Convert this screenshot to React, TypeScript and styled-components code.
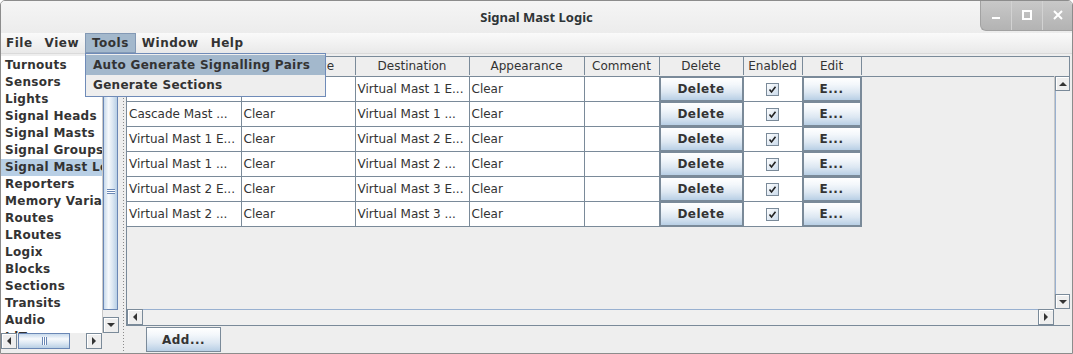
import React from "react";
import styled, {createGlobalStyle, css} from "styled-components";

const GlobalStyle = createGlobalStyle`
    html, body {
        margin: 0;
        padding: 0;
        background: #ffffff;
    }
    body {
        font-family: "DejaVu Sans", sans-serif;
        font-size: 12px;
        color: #333333;
    }
`;

const GRID = "#7a8a99";
const SELECT = "#b8cfe5";
const MENU_SELECT = "#a3b8cc";

const Frame = styled.div`
    position: relative;
    width: 1073px;
    height: 354px;
    box-sizing: border-box;
    display: flex;
    flex-direction: column;
    background: #eeeeee;
    border: 1px solid #8c8c8c;
    border-radius: 5px 5px 0 0;
    overflow: hidden;
`;

const TitleBar = styled.div`
    height: 32px;
    flex: none;
    display: grid;
    grid-template-columns: 1fr auto 1fr;
    align-items: start;
    background: linear-gradient(#f5f5f5, #ececec);
`;

const Title = styled.div`
    align-self: center;
    font-family: "Noto Sans", "DejaVu Sans", sans-serif;
    font-weight: 700;
    font-size: 13px;
    color: #2e3436;
`;

const Controls = styled.div`
    justify-self: end;
    display: flex;
    height: 30px;
    margin-top: -1px;
    margin-right: -1px;
    border: 1px solid #a2a2a2;
    border-top: none;
    border-right: none;
    border-bottom-left-radius: 6px;
    overflow: hidden;
    background: linear-gradient(#c9c9c9, #b3b3b3);
`;

const ControlButton = styled.div<{ $first?: boolean }>`
    width: 30px;
    display: flex;
    align-items: center;
    justify-content: center;
    ${(p) =>
        !p.$first &&
        css`
            border-left: 1px solid #d2d2d2;
        `}
`;

const MenuBar = styled.div`
    height: 20px;
    flex: none;
    display: flex;
    align-items: stretch;
    margin-left: -1px;
    background: linear-gradient(#fafafa, #e9e9e9);
    border-bottom: 1px solid #dadada;
`;

const MenuItem = styled.div<{ $active?: boolean }>`
    display: flex;
    align-items: center;
    padding: 0 5px;
    font-weight: 700;
    font-size: 12px;
    letter-spacing: 0.5px;
    color: #333333;
    box-sizing: border-box;
    border: 1px solid transparent;
    ${(p) =>
        p.$active &&
        css`
            padding: 0 6px;
            background: ${MENU_SELECT};
            border-color: #8399b5;
        `}
`;

const Popup = styled.div`
    position: absolute;
    left: 84px;
    top: 52px;
    width: 241px;
    box-sizing: border-box;
    border: 1px solid #6f8bb8;
    background: #eeeeee;
    padding: 1px 0;
    z-index: 5;
`;

const PopupItem = styled.div<{ $active?: boolean }>`
    height: 20px;
    display: flex;
    align-items: center;
    padding-left: 7px;
    font-weight: 700;
    letter-spacing: 0.3px;
    white-space: nowrap;
    background: ${(p) => (p.$active ? MENU_SELECT : "transparent")};
`;

const Body = styled.div`
    flex: 1;
    display: flex;
    min-height: 0;
    padding-top: 2px;
`;

const LeftPane = styled.div`
    width: 117px;
    flex: none;
    display: flex;
    flex-direction: column;
    padding-bottom: 4px;
`;

const ListRow = styled.div`
    flex: 1;
    display: flex;
    min-height: 0;
`;

const ListView = styled.div`
    flex: 1;
    background: #ffffff;
    overflow: hidden;
    padding-top: 1px;
`;

const ListEntry = styled.div<{ $selected?: boolean }>`
    height: 17px;
    line-height: 17px;
    padding-left: 4px;
    font-weight: 700;
    letter-spacing: 0.3px;
    white-space: nowrap;
    color: #333333;
    background: ${(p) => (p.$selected ? SELECT : "transparent")};
`;

const VBar = styled.div`
    width: 16px;
    flex: none;
    display: flex;
    flex-direction: column;
    background: #eeeeee;
    box-sizing: border-box;
    border-left: 1px solid #c8c8c8;
`;

const HBar = styled.div`
    height: 16px;
    flex: none;
    display: flex;
    background: #eeeeee;
`;

const ArrowButton = styled.div<{ $size?: number }>`
    flex: none;
    width: ${(p) => p.$size ?? 16}px;
    height: ${(p) => p.$size ?? 16}px;
    box-sizing: border-box;
    display: flex;
    align-items: center;
    justify-content: center;
    background: #eeeeee;
    border: 1px solid ${GRID};
    box-shadow: inset 1px 1px 0 #ffffff;
`;

const Triangle = styled.div<{ $dir: "up" | "down" | "left" | "right" }>`
    width: 0;
    height: 0;
    ${(p) =>
        p.$dir === "up"
            ? css`
                  border-left: 4px solid transparent;
                  border-right: 4px solid transparent;
                  border-bottom: 4px solid #333;
              `
            : p.$dir === "down"
            ? css`
                  border-left: 4px solid transparent;
                  border-right: 4px solid transparent;
                  border-top: 4px solid #333;
              `
            : p.$dir === "left"
            ? css`
                  border-top: 4px solid transparent;
                  border-bottom: 4px solid transparent;
                  border-right: 4px solid #333;
              `
            : css`
                  border-top: 4px solid transparent;
                  border-bottom: 4px solid transparent;
                  border-left: 4px solid #333;
              `}
`;

const Track = styled.div`
    flex: 1;
    display: flex;
    min-width: 0;
    min-height: 0;
`;

const VThumb = styled.div<{ $start: number; $end: number }>`
    margin-top: ${(p) => p.$start}px;
    margin-bottom: ${(p) => p.$end}px;
    flex: 1;
    box-sizing: border-box;
    border: 1px solid #6a87b5;
    background: linear-gradient(to right, #c8daec 0%, #f6f9fc 35%, #dde8f3 65%, #b8cfe5 100%);
    display: flex;
    align-items: center;
    justify-content: center;
`;

const HThumb = styled.div<{ $start: number; $end: number }>`
    margin-left: ${(p) => p.$start}px;
    margin-right: ${(p) => p.$end}px;
    flex: 1;
    box-sizing: border-box;
    border: 1px solid #6a87b5;
    background: linear-gradient(#c8daec 0%, #f6f9fc 35%, #dde8f3 65%, #b8cfe5 100%);
    display: flex;
    align-items: center;
    justify-content: center;
`;

const Grip = styled.div<{ $vertical?: boolean }>`
    ${(p) =>
        p.$vertical
            ? css`
                  width: 8px;
                  height: 5px;
                  background: repeating-linear-gradient(#6a87b5 0 1px, #ffffff 1px 2px);
              `
            : css`
                  width: 5px;
                  height: 8px;
                  background: repeating-linear-gradient(to right, #6a87b5 0 1px, #ffffff 1px 2px);
              `}
`;

const FullVThumb = styled.div`
    flex: 1;
    border-left: 1px solid #98b0d0;
    background: #f0f0f0;
`;

const FullHThumb = styled.div`
    flex: 1;
    border-top: 1px solid #98b0d0;
    background: #f0f0f0;
`;

const Corner = styled.div`
    width: 16px;
    flex: none;
    background: #eeeeee;
`;

const Divider = styled.div`
    width: 8px;
    flex: none;
    display: flex;
    &::after {
        content: "";
        width: 1px;
        margin-left: 5px;
        background: repeating-linear-gradient(#8a8a8a 0 1px, transparent 1px 3px);
    }
`;

const RightPane = styled.div`
    flex: 1;
    display: flex;
    flex-direction: column;
    margin-right: 2px;
    min-width: 0;
`;

const TableScroll = styled.div`
    height: 270px;
    flex: none;
    box-sizing: border-box;
    border: 1px solid ${GRID};
    display: grid;
    grid-template-columns: 1fr 15px;
    grid-template-rows: 19px 1fr 16px;
`;

const HeaderArea = styled.div`
    grid-column: 1 / 3;
    overflow: hidden;
`;

const Viewport = styled.div`
    overflow: hidden;
    border-top: 1px solid ${GRID};
`;

const Table = styled.table`
    border-collapse: collapse;
    table-layout: fixed;
    width: 734px;
`;

const HeadCell = styled.th`
    height: 18px;
    padding: 0;
    font-weight: 400;
    font-size: 12px;
    color: #333333;
    text-align: center;
    background: #eeeeee;
    border-right: 1px solid ${GRID};
    white-space: nowrap;
    overflow: hidden;
`;

const Cell = styled.td<{ $center?: boolean }>`
    height: 24px;
    padding: 0 0 0 ${(p) => (p.$center ? 0 : 2)}px;
    border: 1px solid ${GRID};
    border-top: none;
    background: #ffffff;
    white-space: nowrap;
    overflow: hidden;
    text-align: ${(p) => (p.$center ? "center" : "left")};
    vertical-align: middle;
    &:first-child {
        border-left: none;
    }
`;

const ButtonCell = styled.td`
    height: 24px;
    padding: 0;
    border: 1px solid ${GRID};
    border-top: none;
`;

const oceanGradient = css`
    background: linear-gradient(#ffffff 0%, #f3f7fb 30%, #dce7f2 65%, #b8cfe5 100%);
`;

const CellButton = styled.div`
    height: 24px;
    box-sizing: border-box;
    border: 1px solid ${GRID};
    ${oceanGradient};
    display: flex;
    align-items: center;
    justify-content: center;
    font-weight: 700;
    letter-spacing: 0.5px;
    color: #333333;
`;

const ButtonRow = styled.div`
    flex: 1;
    display: flex;
    align-items: flex-start;
    padding: 1px 0 0 20px;
`;

const PushButton = styled.div`
    width: 75px;
    height: 25px;
    box-sizing: border-box;
    border: 1px solid ${GRID};
    ${oceanGradient};
    display: flex;
    align-items: center;
    justify-content: center;
    font-weight: 700;
    letter-spacing: 0.5px;
    color: #333333;
`;

const columns = [
    {title: "Source", width: 114},
    {title: "Appearance", width: 114},
    {title: "Destination", width: 114},
    {title: "Appearance", width: 115},
    {title: "Comment", width: 75},
    {title: "Delete", width: 84},
    {title: "Enabled", width: 59},
    {title: "Edit", width: 59},
];

const rows = [
    ["Cascade Mast ...", "Clear", "Virtual Mast 1 E...", "Clear"],
    ["Cascade Mast ...", "Clear", "Virtual Mast 1 ...", "Clear"],
    ["Virtual Mast 1 E...", "Clear", "Virtual Mast 2 E...", "Clear"],
    ["Virtual Mast 1 ...", "Clear", "Virtual Mast 2 ...", "Clear"],
    ["Virtual Mast 2 E...", "Clear", "Virtual Mast 3 E...", "Clear"],
    ["Virtual Mast 2 ...", "Clear", "Virtual Mast 3 ...", "Clear"],
];

const tables = [
    "Turnouts",
    "Sensors",
    "Lights",
    "Signal Heads",
    "Signal Masts",
    "Signal Groups",
    "Signal Mast Logic",
    "Reporters",
    "Memory Variables",
    "Routes",
    "LRoutes",
    "Logix",
    "Blocks",
    "Sections",
    "Transits",
    "Audio",
    "IdTags",
];

const Cols = () => (
    <colgroup>
        {columns.map((c, i) => (
            <col key={i} style={{width: c.width}} />
        ))}
    </colgroup>
);

const CheckBox = () => (
    <svg width="13" height="13" viewBox="0 0 13 13" style={{display: "block", margin: "0 auto"}}>
        <defs>
            <linearGradient id="cbg" x1="0" y1="0" x2="1" y2="1">
                <stop offset="0" stopColor="#ffffff" />
                <stop offset="1" stopColor="#c9d9ea" />
            </linearGradient>
        </defs>
        <rect x="0.5" y="0.5" width="12" height="12" fill="url(#cbg)" stroke={GRID} />
        <path d="M3.5 6.5 L5.5 9 L9.5 3.8" fill="none" stroke="#222" strokeWidth="1.6" />
    </svg>
);

function App() {
    return (
        <>
            <GlobalStyle />
            <Frame>
                <TitleBar>
                    <div />
                    <Title>Signal Mast Logic</Title>
                    <Controls>
                        <ControlButton $first>
                            <svg width="10" height="10" viewBox="0 0 10 10">
                                <rect x="1" y="7" width="8" height="2" fill="#ffffff" />
                            </svg>
                        </ControlButton>
                        <ControlButton>
                            <svg width="10" height="10" viewBox="0 0 10 10">
                                <rect x="1" y="1" width="8" height="8" fill="none" stroke="#ffffff" strokeWidth="2" />
                            </svg>
                        </ControlButton>
                        <ControlButton>
                            <svg width="10" height="10" viewBox="0 0 10 10">
                                <path d="M1 1 L9 9 M9 1 L1 9" stroke="#ffffff" strokeWidth="2" />
                            </svg>
                        </ControlButton>
                    </Controls>
                </TitleBar>
                <MenuBar>
                    <MenuItem>File</MenuItem>
                    <MenuItem>View</MenuItem>
                    <MenuItem $active>Tools</MenuItem>
                    <MenuItem>Window</MenuItem>
                    <MenuItem>Help</MenuItem>
                </MenuBar>
                <Body>
                    <LeftPane>
                        <ListRow>
                            <ListView>
                                {tables.map((t) => (
                                    <ListEntry key={t} $selected={t === "Signal Mast Logic"}>
                                        {t}
                                    </ListEntry>
                                ))}
                            </ListView>
                            <VBar>
                                <ArrowButton>
                                    <Triangle $dir="up" />
                                </ArrowButton>
                                <Track>
                                    <VThumb $start={1} $end={7}>
                                        <Grip $vertical />
                                    </VThumb>
                                </Track>
                                <ArrowButton>
                                    <Triangle $dir="down" />
                                </ArrowButton>
                            </VBar>
                        </ListRow>
                        <HBar>
                            <ArrowButton>
                                <Triangle $dir="left" />
                            </ArrowButton>
                            <Track>
                                <HThumb $start={1} $end={16}>
                                    <Grip />
                                </HThumb>
                            </Track>
                            <ArrowButton>
                                <Triangle $dir="right" />
                            </ArrowButton>
                            <Corner />
                        </HBar>
                    </LeftPane>
                    <Divider />
                    <RightPane>
                        <TableScroll>
                            <HeaderArea>
                                <Table>
                                    <Cols />
                                    <thead>
                                        <tr>
                                            {columns.map((c, i) => (
                                                <HeadCell key={i}>{c.title}</HeadCell>
                                            ))}
                                        </tr>
                                    </thead>
                                </Table>
                            </HeaderArea>
                            <Viewport>
                                <Table>
                                    <Cols />
                                    <tbody>
                                        {rows.map((r, i) => (
                                            <tr key={i}>
                                                {r.map((v, j) => (
                                                    <Cell key={j}>{v}</Cell>
                                                ))}
                                                <Cell />
                                                <ButtonCell>
                                                    <CellButton>Delete</CellButton>
                                                </ButtonCell>
                                                <Cell $center>
                                                    <CheckBox />
                                                </Cell>
                                                <ButtonCell>
                                                    <CellButton>E...</CellButton>
                                                </ButtonCell>
                                            </tr>
                                        ))}
                                    </tbody>
                                </Table>
                            </Viewport>
                            <VBar>
                                <ArrowButton $size={15}>
                                    <Triangle $dir="up" />
                                </ArrowButton>
                                <Track>
                                    <FullVThumb />
                                </Track>
                                <ArrowButton $size={15}>
                                    <Triangle $dir="down" />
                                </ArrowButton>
                            </VBar>
                            <HBar>
                                <ArrowButton>
                                    <Triangle $dir="left" />
                                </ArrowButton>
                                <Track>
                                    <FullHThumb />
                                </Track>
                                <ArrowButton>
                                    <Triangle $dir="right" />
                                </ArrowButton>
                            </HBar>
                            <Corner />
                        </TableScroll>
                        <ButtonRow>
                            <PushButton>Add...</PushButton>
                        </ButtonRow>
                    </RightPane>
                </Body>
                <Popup>
                    <PopupItem $active>Auto Generate Signalling Pairs</PopupItem>
                    <PopupItem>Generate Sections</PopupItem>
                </Popup>
            </Frame>
        </>
    );
}

export default App;
